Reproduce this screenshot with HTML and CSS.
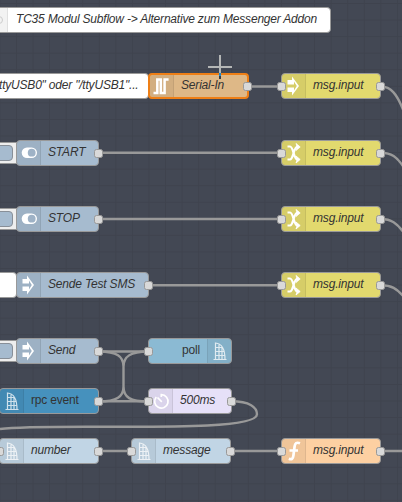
FILE: index.html
```
<!DOCTYPE html>
<html lang="de">
<head>
<meta charset="utf-8">
<title>Flow</title>
<link rel="stylesheet" href="styles.css">
</head>
<body>
<svg class="defs" width="0" height="0">
  <symbol id="arrow" viewBox="0 0 24 24"><path d="M5.500 6H10V2.500L17 12l-7 9.500V18H5.500v-4.500H12v3L14.800 12 12 7.500v3H5.500z" fill="#fff"/></symbol>
  <symbol id="shuffle" viewBox="0 0 24 24"><path d="M5.500 5.500H8c3.500 0 3.500 13 7.500 13h1M5.500 18.500H8c3.500 0 3.500-13 7.500-13h1" fill="none" stroke="#fff" stroke-width="2.200"/><path d="M14 2.500 18.200 6 14 9.500l1.200-3.500zM14 15l4.200 3.500L14 22l1.200-3.500z" fill="#fff" stroke="#fff" stroke-width=".8"/></symbol>
  <symbol id="toggle" viewBox="0 0 24 24"><rect x="4.700" y="6.500" width="15.300" height="10.500" rx="5.250" fill="#fff"/><circle cx="14.700" cy="11.700" r="3.900" class="knob"/></symbol>
  <symbol id="serial" viewBox="0 0 24 24"><path d="M3.500 19H7.300V5.500h3.500V19h3.800V5.500h4" fill="none" stroke="#fff" stroke-width="2.500"/></symbol>
  <symbol id="building" viewBox="0 0 24 24"><path d="M7.500 20.500V4c6 .5 9.500 6 9.500 16.500M11 4.500v16M14 7.500v13M7.500 8.500h6.500M7.500 12.500h8.500M7.500 16.500h9M5.500 20.500h13" fill="none" stroke="#fff" stroke-width="1.200"/></symbol>
  <symbol id="timer" viewBox="0 0 24 24"><path d="M12.300 8V5.700a6.700 6.700 0 1 1-5 2.300M8.500 8.500l4.300 4.300" fill="none" stroke="#fff" stroke-width="1.700"/></symbol>
  <symbol id="function" viewBox="0 0 24 24"><path d="M18 4.200c-3.500-1.200-5-.2-5.400 3.300l-1.200 9c-.4 3.500-1.600 4.300-4.600 3.200M7.500 11.500H16" fill="none" stroke="#fff" stroke-width="2.700"/></symbol>
</svg>
<main class="canvas">
  <svg class="wires" width="402" height="502" viewBox="0 0 402 502">
    <path d="M248 86.500H281M99 152.700H281M99 219H281M148 285.200H281M99 351.500H148M99 401.300H148M99 451H131M231 451H281M380 451H402"/>
    <path d="M381 86.500c10 0 16 8 22 23M381 152.700c10 0 16 4 23 15M381 219c10 0 16 4 23 14M381 285.200c10 0 16 3 23 12"/>
    <path d="M99 351.500c18 0 24.500 5 24.500 15v20c0 11 7 15 24.500 15M99 401.500c18 0 24.500-5 24.500-15v-20c0-10 7-15 24.500-15"/>
    <path d="M231 401.300c19 0 26 6 26 13C257 435 52 422 0 429"/>
  </svg>

  <div class="node comment title"><span class="icon"><i class="bubble"></i></span><span class="label">TC35 Modul Subflow -&gt; Alternative zum Messenger Addon</span></div>
  <div class="node comment usb"><span class="label">ttyUSB0" oder "/ttyUSB1"...</span></div>
  <div class="node serial"><span class="icon"><svg><use href="#serial"/></svg></span><span class="label">Serial-In</span><i class="port out"></i></div>
  <div class="node yellow r1"><i class="port in"></i><span class="icon"><svg><use href="#arrow"/></svg></span><span class="label">msg.input</span><i class="port out"></i></div>

  <div class="button r2"><i></i></div>
  <div class="node blue r2"><span class="icon"><svg><use href="#toggle"/></svg></span><span class="label">START</span><i class="port out"></i></div>
  <div class="node yellow r2"><i class="port in"></i><span class="icon"><svg><use href="#shuffle"/></svg></span><span class="label">msg.input</span><i class="port out"></i></div>

  <div class="button r3"><i></i></div>
  <div class="node blue r3"><span class="icon"><svg><use href="#toggle"/></svg></span><span class="label">STOP</span><i class="port out"></i></div>
  <div class="node yellow r3"><i class="port in"></i><span class="icon"><svg><use href="#shuffle"/></svg></span><span class="label">msg.input</span><i class="port out"></i></div>

  <div class="node comment stub"></div>
  <div class="node blue wide r4"><span class="icon"><svg><use href="#arrow"/></svg></span><span class="label">Sende Test SMS</span><i class="port out"></i></div>
  <div class="node yellow r4"><i class="port in"></i><span class="icon"><svg><use href="#shuffle"/></svg></span><span class="label">msg.input</span><i class="port out"></i></div>

  <div class="button r5"><i></i></div>
  <div class="node blue r5"><span class="icon"><svg><use href="#arrow"/></svg></span><span class="label">Send</span><i class="port out"></i></div>
  <div class="node poll r5"><i class="port in"></i><span class="label">poll</span><span class="icon right"><svg><use href="#building"/></svg></span></div>

  <div class="node rpc r6"><span class="icon"><svg><use href="#building"/></svg></span><span class="label">rpc event</span><i class="port out"></i></div>
  <div class="node delay r6"><i class="port in"></i><span class="icon"><svg><use href="#timer"/></svg></span><span class="label">500ms</span><i class="port out"></i></div>

  <div class="node pale number r7"><i class="port in"></i><span class="icon"><svg><use href="#building"/></svg></span><span class="label">number</span><i class="port out"></i></div>
  <div class="node pale message r7"><i class="port in"></i><span class="icon"><svg><use href="#building"/></svg></span><span class="label">message</span><i class="port out"></i></div>
  <div class="node func r7"><i class="port in"></i><span class="icon"><svg><use href="#function"/></svg></span><span class="label">msg.input</span><i class="port out"></i></div>

  <svg class="cursor" width="26" height="26" viewBox="0 0 26 26"><path d="M1 13h24M13 1v18" stroke="#b4b6b5" stroke-width="2"/><path d="M13 19v3" stroke="#2389c8" stroke-width="2"/><path d="M13 22v3" stroke="#343a44" stroke-width="2"/></svg>
</main>
</body>
</html>
```
FILE: styles.css
```
* { box-sizing: border-box; }
body { margin: 0; background: #434854; }
.defs { position: absolute; }
.canvas {
  position: relative; width: 402px; height: 502px; overflow: hidden;
  background-color: #434854;
  background-image:
    linear-gradient(90deg, #3f434e 1px, transparent 1px),
    linear-gradient(#3f434e 1px, transparent 1px);
  background-size: 16.570px 16.570px;
  background-position: -0.600px 3px;
  font: italic 12px "Liberation Sans", Arial, sans-serif;
  color: #333;
}
.wires { position: absolute; left: 0; top: 0; fill: none; stroke: #999; stroke-width: 2.400; }
.node {
  position: absolute; height: 26px; display: flex; align-items: stretch;
  border: 1px solid #999; border-radius: 4px;
}
.icon {
  width: 24px; flex: none; display: flex; align-items: center;
  background: rgba(0, 0, 0, .05); border-right: 1px solid rgba(0, 0, 0, .08);
  border-radius: 3px 0 0 3px;
}
.icon svg { width: 24px; height: 24px; flex: none; }
.icon.right { border-right: 0; border-left: 1px solid rgba(0, 0, 0, .08); border-radius: 0 3px 3px 0; }
.label { line-height: 23px; white-space: nowrap; padding-left: 7px; letter-spacing: -.18px; }
.port {
  position: absolute; top: 8px; width: 9px; height: 9px;
  border: 1px solid #999; border-radius: 2.500px; background: #d9d9d9;
}
.in { left: -5px; }
.out { right: -5px; }
.r2 { top: 140px; }
.r3 { top: 206px; }
.r4 { top: 272px; }
.r5 { top: 338px; }
.r6 { top: 388px; }
.r7 { top: 438px; }
.comment { background: #fff; }
.title { left: -17px; top: 7px; width: 348px; }
.title .label { padding-left: 8px; letter-spacing: -.2px; }
.bubble { width: 9px; height: 8px; border: 1px solid #ccc; border-radius: 5px; margin-left: 10px; }
.usb { left: -20px; top: 73px; width: 169px; }
.usb .label { padding-left: 18px; letter-spacing: -.2px; }
.stub { left: -20px; top: 272px; width: 37px; }
.serial { left: 148px; top: 73px; width: 101px; background: #deb887; border: 2px solid #ee7f16; }
.serial .label { line-height: 21px; padding-left: 7px; }
.serial .port { top: 7px; }
.yellow { left: 281px; width: 100px; background: #e2d96e; }
.yellow.r1 { top: 73px; }
.blue { left: 16px; width: 83px; background: #a6bbcf; }
.blue.wide { width: 133px; }
.knob { fill: #9eb2c6; }
.poll { left: 148px; width: 84px; background: #8bbad3; font-style: normal; }
.poll .label { width: 58px; padding-left: 33px; }
.rpc { left: -1px; width: 100px; background: #4691bd; font-style: normal; }
.delay { left: 148px; width: 84px; background: #e6e0f8; }
.pale { background: #c1d5e5; width: 100px; }
.number { left: -1px; }
.message { left: 131px; }
.func { left: 281px; width: 100px; background: #fdd0a2; }
.rpc svg, .poll svg, .pale svg { opacity: .75; }
.button { position: absolute; left: -12px; width: 29px; height: 22px; margin-top: 2px; background: #eee; border: 1px solid #999; }
.button i { position: absolute; right: 3px; top: 2px; width: 20px; height: 16px; background: #a6bbcf; border: 1px solid #888f98; border-radius: 4px; }
.cursor { position: absolute; left: 207px; top: 54px; }
```
